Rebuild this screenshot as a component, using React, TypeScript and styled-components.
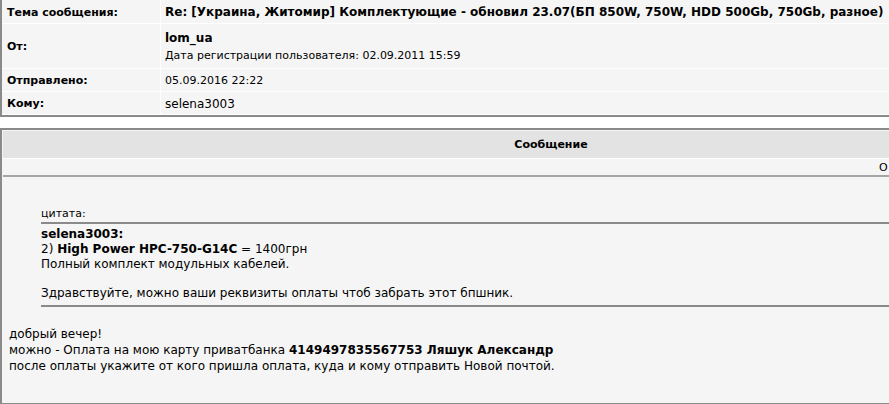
import type { ReactNode } from "react";
import styled, { createGlobalStyle } from "styled-components";

const GlobalStyle = createGlobalStyle`
  html, body {
    margin: 0;
    padding: 0;
    background: #ffffff;
    overflow: hidden;
  }
  body {
    font-family: "DejaVu Sans", Verdana, sans-serif;
    color: #000000;
  }
`;

const St = {
  Page: styled.div`
    width: 889px;
    height: 404px;
    overflow: hidden;
  `,
  Header: styled.div`
    width: 1102px;
    display: flex;
    flex-direction: column;
    gap: 1px;
    background: #ffffff;
    border-left: 2px solid #8a8a8a;
    border-bottom: 2px solid #8a8a8a;
    padding-bottom: 1px;
  `,
  Row: styled.div<{ $h: number }>`
    display: grid;
    grid-template-columns: 158px 1fr;
    gap: 1px;
    height: ${(p) => p.$h}px;
  `,
  Label: styled.div`
    background: #f5f5f5;
    display: flex;
    align-items: center;
    padding: 1px 0 0 5px;
    font-size: 11px;
    font-weight: bold;
    white-space: nowrap;
  `,
  Value: styled.div`
    background: #f5f5f5;
    display: flex;
    flex-direction: column;
    justify-content: center;
    gap: 4px;
    padding: 1px 0 0 4px;
    font-size: 12px;
    white-space: nowrap;
  `,
  Author: styled.div`
    font-size: 12px;
    font-weight: bold;
  `,
  Small: styled.div`
    font-size: 11px;
  `,
  Message: styled.div`
    width: 1102px;
    margin-top: 11px;
    border: 2px solid #8a8a8a;
    background: #f5f5f5;
    height: 277px;
    box-sizing: border-box;
    display: flex;
    flex-direction: column;
  `,
  Caption: styled.div`
    height: 27px;
    margin: 1px 1px 0;
    background: #e3e3e3;
    border-bottom: 1px solid #ffffff;
    display: flex;
    align-items: center;
    justify-content: center;
    font-size: 11px;
    font-weight: bold;
  `,
  Meta: styled.div`
    height: 16px;
    padding-left: 876px;
    margin: 0 1px;
    border-bottom: 2px solid #a6a6a6;
    display: flex;
    align-items: center;
    font-size: 11px;
    white-space: nowrap;
  `,
  Body: styled.div`
    padding: 30px 0 0 7px;
    font-size: 12px;
  `,
  Quote: styled.div`
    margin-left: 32px;
    border-bottom: 2px solid #8a8a8a;
    padding-bottom: 5px;
  `,
  QuoteTitle: styled.div`
    font-size: 11px;
    line-height: 14px;
    border-bottom: 2px solid #8a8a8a;
    padding-bottom: 1px;
  `,
  QuoteText: styled.div`
    padding-top: 3px;
  `,
  Line: styled.div<{ $h?: number }>`
    height: ${(p) => p.$h ?? 15}px;
    line-height: ${(p) => p.$h ?? 15}px;
    white-space: nowrap;
  `,
  Text: styled.div`
    margin-top: 19px;
  `,
};

interface Field {
  label: string;
  height: number;
  value: ReactNode;
}

const fields: Field[] = [
  {
    label: "Тема сообщения:",
    height: 23,
    value: (
      <b>
        Re: [Украина, Житомир] Комплектующие - обновил 23.07(БП 850W, 750W,
        HDD 500Gb, 750Gb, разное)
      </b>
    ),
  },
  {
    label: "От:",
    height: 44,
    value: (
      <>
        <St.Author>lom_ua</St.Author>
        <St.Small>Дата регистрации пользователя: 02.09.2011 15:59</St.Small>
      </>
    ),
  },
  {
    label: "Отправлено:",
    height: 22,
    value: <St.Small>05.09.2016 22:22</St.Small>,
  },
  { label: "Кому:", height: 22, value: "selena3003" },
];

function App() {
  return (
    <St.Page>
      <GlobalStyle />
      <St.Header>
        {fields.map((f) => (
          <St.Row key={f.label} $h={f.height}>
            <St.Label>{f.label}</St.Label>
            <St.Value>{f.value}</St.Value>
          </St.Row>
        ))}
      </St.Header>

      <St.Message>
        <St.Caption>Сообщение</St.Caption>
        <St.Meta>О</St.Meta>
        <St.Body>
          <St.Quote>
            <St.QuoteTitle>цитата:</St.QuoteTitle>
            <St.QuoteText>
              <St.Line>
                <b>selena3003:</b>
              </St.Line>
              <St.Line>
                2) <b>High Power HPC-750-G14C</b> = 1400грн
              </St.Line>
              <St.Line>Полный комплект модульных кабелей.</St.Line>
              <St.Line $h={14} />
              <St.Line $h={14}>
                Здравствуйте, можно ваши реквизиты оплаты чтоб забрать этот
                бпшник.
              </St.Line>
            </St.QuoteText>
          </St.Quote>
          <St.Text>
            <St.Line $h={16}>добрый вечер!</St.Line>
            <St.Line $h={16}>
              можно - Оплата на мою карту приватбанка{" "}
              <b>4149497835567753 Ляшук Александр</b>
            </St.Line>
            <St.Line $h={16}>
              после оплаты укажите от кого пришла оплата, куда и кому отправить
              Новой почтой.
            </St.Line>
          </St.Text>
        </St.Body>
      </St.Message>
    </St.Page>
  );
}

export default App;
